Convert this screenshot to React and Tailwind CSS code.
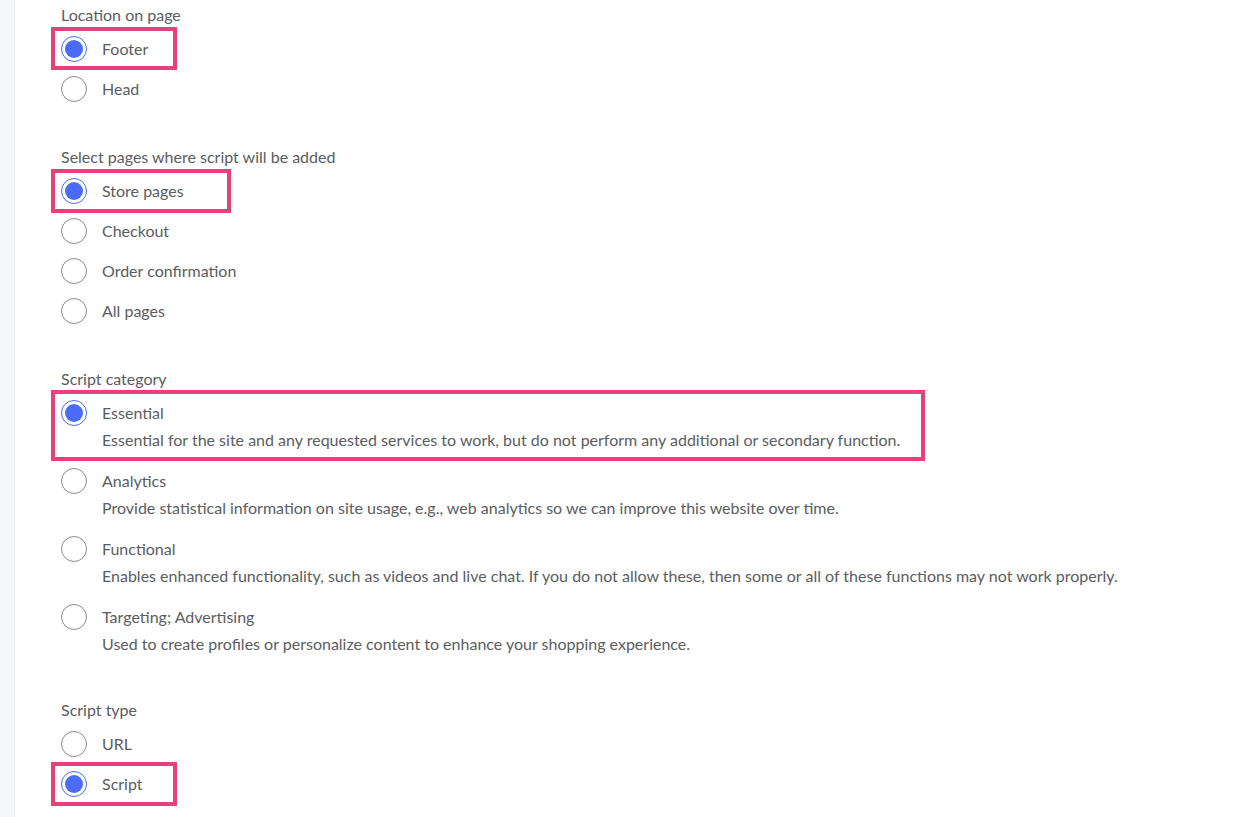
import React from "react";

const sections = [
  {
    title: "Location on page",
    gap: "mt-[5px]",
    options: [
      { label: "Footer", checked: true, box: "w-[126px] h-[43px]" },
      { label: "Head" },
    ],
  },
  {
    title: "Select pages where script will be added",
    gap: "mt-[38px]",
    options: [
      { label: "Store pages", checked: true, box: "w-[180px] h-[44px]" },
      { label: "Checkout" },
      { label: "Order confirmation" },
      { label: "All pages" },
    ],
  },
  {
    title: "Script category",
    gap: "mt-[38px]",
    options: [
      {
        label: "Essential",
        desc: "Essential for the site and any requested services to work, but do not perform any additional or secondary function.",
        checked: true,
        box: "w-[874px] h-[71px] -top-[3px]",
      },
      {
        label: "Analytics",
        desc: "Provide statistical information on site usage, e.g., web analytics so we can improve this website over time.",
      },
      {
        label: "Functional",
        desc: "Enables enhanced functionality, such as videos and live chat. If you do not allow these, then some or all of these functions may not work properly.",
      },
      {
        label: "Targeting; Advertising",
        desc: "Used to create profiles or personalize content to enhance your shopping experience.",
      },
    ],
  },
  {
    title: "Script type",
    gap: "mt-[35px]",
    options: [
      { label: "URL" },
      { label: "Script", checked: true, box: "w-[126px] h-[44px]" },
    ],
  },
];

const Radio = ({ checked }) =>
  checked ? (
    <span className="-my-px flex h-[26px] w-[26px] shrink-0 items-center justify-center rounded-full border border-[#4a6cf7] bg-white">
      <span className="h-[18px] w-[18px] rounded-full bg-[#4a6cf7]" />
    </span>
  ) : (
    <span className="-my-px h-[26px] w-[26px] shrink-0 rounded-full border border-[#8c8c8c] bg-white" />
  );

const Option = ({ label, desc, checked, box }) => (
  <div className={`relative flex items-start gap-[15px] ${desc ? "pt-2 pb-[11px]" : "py-2"}`}>
    {box && (
      <span className={`pointer-events-none absolute -left-[10px] -top-[2px] border-[4px] border-[#e8407b] ${box}`} />
    )}
    <Radio checked={checked} />
    <div className="flex flex-col">
      <span className="leading-6">{label}</span>
      {desc && <span className="mt-[5px] leading-5">{desc}</span>}
    </div>
  </div>
);

export default function App() {
  return (
    <div
      className="flex min-h-[817px] bg-white text-[16px] text-[#5a5d61]"
      style={{ fontFamily: "Lato, 'Noto Sans', sans-serif" }}
    >
      <div className="w-[15px] shrink-0 border-r border-[#e8eaed] bg-[#f6f7f9]" />
      <div className="flex flex-col pl-[46px]">
        {sections.map((s) => (
          <div key={s.title} className={s.gap}>
            <div className="mb-1 leading-5">{s.title}</div>
            {s.options.map((o) => (
              <Option key={o.label} {...o} />
            ))}
          </div>
        ))}
      </div>
    </div>
  );
}
